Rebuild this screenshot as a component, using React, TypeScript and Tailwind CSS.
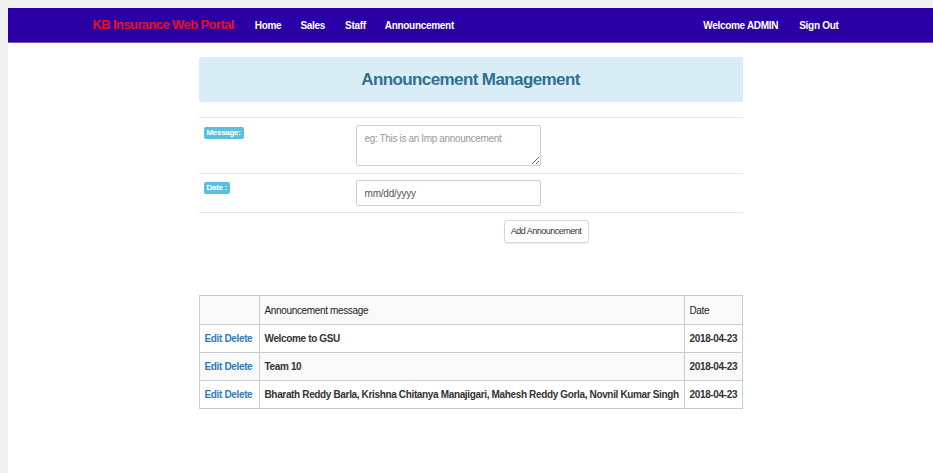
import React from "react";

const ROWS = [
  { id: 1, message: "Welcome to GSU", date: "2018-04-23" },
  { id: 2, message: "Team 10", date: "2018-04-23" },
  { id: 3, message: "Bharath Reddy Barla, Krishna Chitanya Manajigari, Mahesh Reddy Gorla, Novnil Kumar Singh", date: "2018-04-23" },
];

function NavBar() {
  return (
    <div className="h-[35px] bg-[#2a00a6] border-b border-[#7b55b5]">
      <div className="w-[756px] mx-auto h-full flex items-center pr-[10px] text-[10px] font-bold text-white tracking-[-0.3px]">
        <span className="text-[13px] text-[#e8101e] tracking-[-0.6px]">KB Insurance Web Portal</span>
        <span className="ml-[21px]">Home</span>
        <span className="ml-[19px]">Sales</span>
        <span className="ml-[20px]">Staff</span>
        <span className="ml-[19px]">Announcement</span>
        <span className="ml-auto">Welcome ADMIN</span>
        <span className="ml-[21px]">Sign Out</span>
      </div>
    </div>
  );
}

function Badge({ children }: { children: React.ReactNode }) {
  return (
    <span className="block w-fit px-[3px] py-[1px] rounded-[2px] bg-[#5bc0de] text-white text-[8px] font-bold leading-[10px] tracking-[-0.3px]">
      {children}
    </span>
  );
}

export default function App() {
  const [message, setMessage] = React.useState("");
  const [date, setDate] = React.useState("");

  return (
    <div className="min-h-[473px] bg-[#f1f1f1] pt-[8px] pl-[8px]" style={{ fontFamily: '"Liberation Sans", Arial, sans-serif' }}>
      <div className="bg-white min-h-[465px]">
        <NavBar />
        <div className="w-[544px] mx-auto pt-[14px]">
          <div className="h-[45px] bg-[#d9edf7] rounded-[2px] flex items-center justify-center text-[17px] font-bold text-[#31708f] tracking-[-0.6px]">
            Announcement Management
          </div>

          <div className="mt-[15px] border-t border-[#e5e5e5]">
            <div className="flex h-[56px] pt-[7px] border-b border-[#e5e5e5]">
              <div className="w-[157px] pl-[5px] pt-[2px]"><Badge>Message:</Badge></div>
              <textarea
                value={message}
                onChange={(e) => setMessage(e.target.value)}
                placeholder="eg: This is an Imp announcement"
                className="w-[185px] h-[41px] px-[8px] py-[5px] border border-[#d0d0d0] rounded-[2px] text-[10px] tracking-[-0.35px] text-[#555] placeholder:text-[#999] outline-none"
              />
            </div>
            <div className="flex h-[39px] pt-[6px] border-b border-[#e5e5e5]">
              <div className="w-[157px] pl-[5px] pt-[2px]"><Badge>Date :</Badge></div>
              <input
                value={date}
                onChange={(e) => setDate(e.target.value)}
                placeholder="mm/dd/yyyy"
                className="w-[185px] h-[26px] px-[8px] border border-[#d0d0d0] rounded-[2px] text-[10px] tracking-[-0.2px] text-[#555] placeholder:text-[#555] outline-none"
              />
            </div>
            <div className="pt-[7px] pl-[305px]">
              <button className="block w-[85px] h-[23px] border border-[#d6d6d6] rounded-[3px] bg-white text-[9px] tracking-[-0.5px] text-[#333] shadow-[0_1px_1px_rgba(0,0,0,0.08)]">
                Add Announcement
              </button>
            </div>
          </div>

          <table className="mt-[52px] w-full table-fixed border-collapse text-[10px] text-[#333] tracking-[-0.35px]">
            <tbody>
              <tr className="bg-[#f9f9f9] h-[29px]">
                <td className="w-[60px] border border-[#ccc]"></td>
                <td className="border border-[#ccc] px-[5px] text-[#222]">Announcement message</td>
                <td className="w-[58px] border border-[#ccc] px-[5px] text-[#222]">Date</td>
              </tr>
              {ROWS.map((r, i) => (
                <tr key={r.id} className={i % 2 === 1 ? "bg-[#f9f9f9] h-[28px]" : "bg-white h-[28px]"}>
                  <td className="border border-[#ccc] px-[5px] font-bold text-[#337ab7] whitespace-nowrap">Edit Delete</td>
                  <td className="border border-[#ccc] px-[5px] font-bold whitespace-nowrap">{r.message}</td>
                  <td className="border border-[#ccc] px-[5px] font-bold whitespace-nowrap">{r.date}</td>
                </tr>
              ))}
            </tbody>
          </table>
        </div>
      </div>
    </div>
  );
}
